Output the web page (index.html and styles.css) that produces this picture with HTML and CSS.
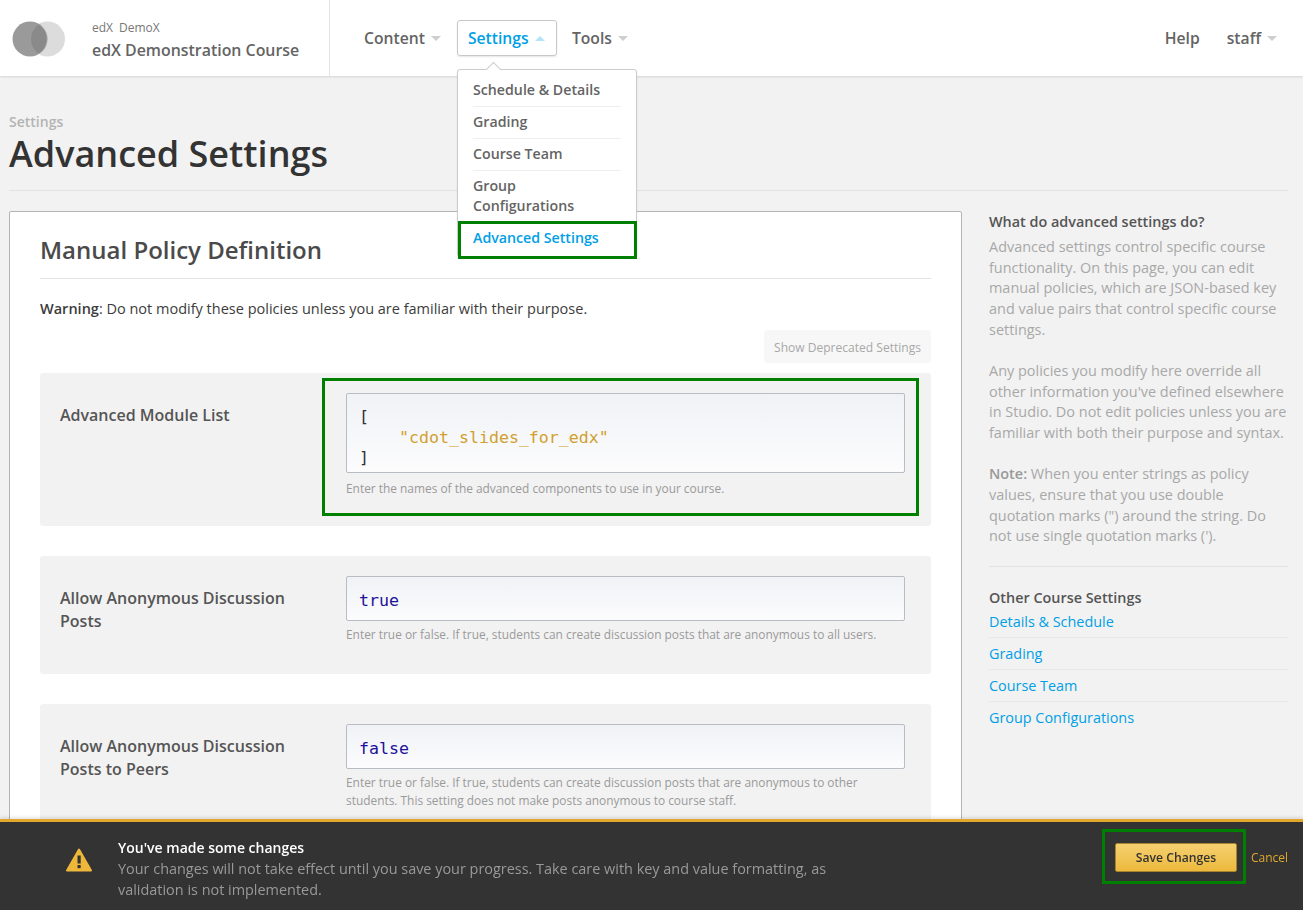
FILE: index.html
```html
<!DOCTYPE html>
<html lang="en">
<head>
    <meta charset="UTF-8">
    <title>Advanced Settings</title>
    <link rel="stylesheet" href="styles.css">
</head>
<body>

    <header class="topbar">
        <div class="course">
            <svg class="logo" width="54" height="36" viewBox="0 0 54 36">
                <circle cx="35.500" cy="18" r="17.500" fill="#dcdcdc"/>
                <circle cx="18" cy="18" r="17.500" fill="#9a9a9a"/>
                <path d="M26.700 3.500a17.500 17.500 0 0 1 0 29a17.500 17.500 0 0 1 0-29z" fill="#8a8a8a"/>
            </svg>
            <div class="course-text">
                <div class="course-org"><span>edX</span><span>DemoX</span></div>
                <div class="course-name">edX Demonstration Course</div>
            </div>
        </div>
        <nav class="nav">
            <div class="nav-item">Content <i class="caret"></i></div>
            <div class="nav-item active">Settings <i class="caret up"></i></div>
            <div class="nav-item">Tools <i class="caret"></i></div>
        </nav>
        <nav class="nav nav-right">
            <div class="nav-item">Help</div>
            <div class="nav-item">staff <i class="caret"></i></div>
        </nav>

        <div class="dropdown">
            <span class="dropdown-tip"></span>
            <a>Schedule &amp; Details</a>
            <a>Grading</a>
            <a>Course Team</a>
            <a class="no-line">Group Configurations</a>
            <a class="current">Advanced Settings</a>
            <span class="mark mark-menu"></span>
        </div>
    </header>

    <div class="page">
        <div class="page-head">
            <div class="subtitle">Settings</div>
            <h1>Advanced Settings</h1>
        </div>

        <div class="columns">
            <section class="panel">
                <h2>Manual Policy Definition</h2>
                <p class="warning"><b>Warning</b>: Do not modify these policies unless you are familiar with their purpose.</p>
                <div class="deprecated-row"><span class="deprecated">Show Deprecated Settings</span></div>

                <div class="policy policy-tall">
                    <div class="policy-label">Advanced Module List</div>
                    <div class="policy-field">
                        <div class="code code-tall">
                            <div>[</div>
                            <div class="code-str">"cdot_slides_for_edx"</div>
                            <div>]</div>
                        </div>
                        <p class="hint">Enter the names of the advanced components to use in your course.</p>
                    </div>
                    <span class="mark mark-policy"></span>
                </div>

                <div class="policy">
                    <div class="policy-label">Allow Anonymous Discussion Posts</div>
                    <div class="policy-field">
                        <div class="code code-kw">true</div>
                        <p class="hint">Enter true or false. If true, students can create discussion posts that are anonymous to all users.</p>
                    </div>
                </div>

                <div class="policy">
                    <div class="policy-label">Allow Anonymous Discussion Posts to Peers</div>
                    <div class="policy-field">
                        <div class="code code-kw">false</div>
                        <p class="hint">Enter true or false. If true, students can create discussion posts that are anonymous to other students. This setting does not make posts anonymous to course staff.</p>
                    </div>
                </div>
            </section>

            <aside class="sidebar">
                <h3>What do advanced settings do?</h3>
                <p>Advanced settings control specific course functionality. On this page, you can edit manual policies, which are JSON-based key and value pairs that control specific course settings.</p>
                <p>Any policies you modify here override all other information you've defined elsewhere in Studio. Do not edit policies unless you are familiar with both their purpose and syntax.</p>
                <p class="last-note"><b>Note:</b> When you enter strings as policy values, ensure that you use double quotation marks (") around the string. Do not use single quotation marks (').</p>
                <div class="side-links">
                    <h3>Other Course Settings</h3>
                    <a>Details &amp; Schedule</a>
                    <a>Grading</a>
                    <a>Course Team</a>
                    <a>Group Configurations</a>
                </div>
            </aside>
        </div>
    </div>

    <footer class="notice">
        <svg class="notice-icon" width="26" height="24" viewBox="0 0 26 24">
            <path d="M13 1.500L25 22.500H1z" fill="#edb83a" stroke="#edb83a" stroke-width="2" stroke-linejoin="round"/>
            <rect x="11.500" y="7.500" width="3.200" height="8" fill="#333"/>
            <rect x="11.500" y="17" width="3.200" height="3.200" fill="#333"/>
        </svg>
        <div class="notice-text">
            <h4>You've made some changes</h4>
            <p>Your changes will not take effect until you save your progress. Take care with key and value formatting, as validation is not implemented.</p>
        </div>
        <div class="notice-actions">
            <div class="save-wrap">
                <button class="save">Save Changes</button>
            </div>
            <a class="cancel">Cancel</a>
        </div>
    </footer>

</body>
</html>
```

FILE: styles.css
```css
* {
    box-sizing: border-box;
}

body {
    margin: 0;
    height: 100vh;
    overflow: hidden;
    background-color: #f2f2f2;
    color: #3c3c3c;
    font-family: 'Open Sans', sans-serif;
    font-size: 14px;
}

/* Top bar */
.topbar {
    position: relative;
    z-index: 2;
    display: flex;
    align-items: stretch;
    height: 76px;
    background-color: #fff;
    box-shadow: 0 1px 2px rgba(0, 0, 0, 0.12);
}

.course {
    display: flex;
    align-items: center;
    width: 330px;
    padding-left: 12px;
    border-right: 1px solid #e4e4e4;
}

.logo {
    margin-right: 26px;
    margin-top: 1px;
}

.course-org {
    display: flex;
    gap: 6px;
    margin-top: 4px;
    font-size: 12px;
    line-height: 16px;
    color: #777;
}

.course-name {
    margin-top: 3px;
    font-size: 15.900px;
    font-weight: 600;
    line-height: 22px;
    color: #646464;
}

.nav {
    display: flex;
    align-items: center;
    gap: 4px;
    padding-left: 23px;
    margin-top: -1px;
}

.nav-right {
    margin-left: auto;
    padding-left: 0;
    padding-right: 15px;
    gap: 5px;
}

.nav-item {
    display: flex;
    align-items: center;
    gap: 6px;
    height: 36px;
    padding: 0 10px;
    border: 1px solid transparent;
    border-radius: 3px;
    font-size: 15.700px;
    font-weight: 600;
    color: #646464;
}

.nav-item.active {
    min-width: 100px;
    margin-left: 1px;
    border-color: #c8c8c8;
    color: #009fe6;
    box-shadow: 0 1px 2px rgba(0, 0, 0, 0.1);
}

.caret {
    width: 0;
    height: 0;
    margin-top: 1px;
    border-left: 5px solid transparent;
    border-right: 5px solid transparent;
    border-top: 5px solid #cfcfcf;
}

.caret.up {
    border-top: 0;
    border-bottom: 5px solid #b3e3f8;
}

/* Settings menu */
.dropdown {
    position: absolute;
    left: 457px;
    top: 69px;
    width: 180px;
    padding: 5px 15px 0;
    background-color: #fff;
    border: 1px solid #ccc;
    border-radius: 3px;
    box-shadow: 0 1px 2px rgba(0, 0, 0, 0.1);
}

.dropdown-tip {
    position: absolute;
    left: 30px;
    top: -6px;
    width: 11px;
    height: 11px;
    background-color: #fff;
    border-top: 1px solid #ccc;
    border-left: 1px solid #ccc;
    transform: rotate(45deg);
}

.dropdown a {
    display: block;
    padding: 5px 20px 6px 0;
    border-bottom: 1px solid #eee;
    font-size: 14.200px;
    font-weight: 600;
    line-height: 20px;
    color: #646464;
}

.dropdown a.no-line {
    border-bottom: 0;
}

.dropdown a.current {
    border-bottom: 0;
    color: #009fe6;
    padding-top: 6px;
    padding-bottom: 8px;
}

/* Green boxes drawn over the screenshot */
.mark {
    position: absolute;
    border: 3px solid #008000;
    pointer-events: none;
}

.mark-menu {
    left: 0;
    top: 151px;
    width: 179px;
    height: 38px;
}

.mark-policy {
    left: 282px;
    top: 5px;
    width: 597px;
    height: 138px;
}

/* Page */
.page {
    padding: 0 15px 0 9px;
}

.page-head {
    padding-top: 36px;
    height: 115px;
    border-bottom: 1px solid #e2e2e2;
}

.subtitle {
    font-size: 14px;
    line-height: 20px;
    font-weight: 600;
    color: #b4b4b4;
}

h1 {
    margin: 0;
    font-size: 36px;
    font-weight: 600;
    line-height: 44px;
    color: #333;
}

.columns {
    display: flex;
    align-items: flex-start;
    margin-top: 20px;
}

.panel {
    flex: 0 0 953px;
    padding: 20px 30px;
    background-color: #fff;
    border: 1px solid #b4b4b4;
    border-radius: 2px;
}

h2 {
    margin: 0;
    height: 47px;
    border-bottom: 1px solid #e2e2e2;
    font-size: 24px;
    font-weight: 600;
    line-height: 36px;
    color: #4a4a4a;
}

.warning {
    margin: 19px 0 0;
    font-size: 14.500px;
    line-height: 22px;
    color: #3c3c3c;
}

.warning b {
    font-weight: 600;
}

.deprecated-row {
    display: flex;
    justify-content: flex-end;
    margin-top: 10px;
}

.deprecated {
    padding: 0 10px;
    height: 33px;
    line-height: 35px;
    font-size: 12.050px;
    color: #a8a8a8;
    background-color: #f7f7f7;
    border-radius: 3px;
}

.policy {
    position: relative;
    display: flex;
    margin-top: 30px;
    padding: 20px 26px 31px 20px;
    background-color: #f2f2f2;
    border-radius: 3px;
}

.policy-tall {
    margin-top: 10px;
    padding-bottom: 29px;
}

.policy-label {
    flex: 0 0 286px;
    padding-right: 30px;
    padding-top: 10.500px;
    font-size: 16px;
    font-weight: 600;
    line-height: 23.500px;
    color: #555;
}

.policy-field {
    flex: 1;
}

.code {
    padding: 13px 12px;
    border: 1px solid #b8bcc4;
    border-radius: 2px;
    background: linear-gradient(#f0f2f6, #fcfcfd);
    font-family: 'DejaVu Sans Mono', monospace;
    font-size: 16.600px;
    line-height: 21px;
    color: #333;
}

.code-tall {
    height: 80px;
    line-height: 20.500px;
}

.code-str {
    padding-left: 40px;
    color: #d1a02f;
}

.code-kw {
    height: 45px;
    color: #221199;
}

.hint {
    margin: 4px 0 0;
    font-size: 11.900px;
    line-height: 18px;
    color: #9a9a9a;
}

.code-tall + .hint {
    margin-top: 6px;
}

/* Sidebar */
.sidebar {
    flex: 0 0 299px;
    margin-left: 27px;
}

h3 {
    margin: 1px 0 5px;
    font-size: 14.400px;
    font-weight: 600;
    line-height: 20px;
    color: #555;
}

.sidebar p {
    margin: 0 0 20.500px;
    font-size: 14.450px;
    line-height: 20.700px;
    color: #a8a8a8;
}

.sidebar p.last-note {
    margin-bottom: 18.500px;
}

.sidebar p b {
    font-weight: 600;
    color: #999;
}

.side-links {
    padding-top: 20px;
    border-top: 1px solid #e2e2e2;
}

.side-links h3 {
    margin-bottom: -2px;
}

.side-links a {
    display: block;
    padding: 5px 0;
    border-bottom: 1px solid #e8e8e8;
    font-size: 14.400px;
    line-height: 21px;
    color: #009fe6;
}

.side-links a:last-child {
    border-bottom: 0;
}

/* Unsaved changes bar */
.notice {
    position: fixed;
    left: 0;
    right: 0;
    bottom: 0;
    z-index: 3;
    display: flex;
    height: 91px;
    padding-left: 66px;
    background-color: #333;
    border-top: 3px solid #e1a82b;
    box-shadow: 0 -2px 3px rgba(0, 0, 0, 0.1);
}

.notice-icon {
    margin-top: 26px;
}

.notice-text {
    width: 720px;
    margin-left: 26px;
    padding-top: 16px;
}

h4 {
    margin: 0;
    font-size: 14px;
    font-weight: 600;
    line-height: 20px;
    color: #fff;
}

.notice-text p {
    margin: 0;
    font-size: 14.430px;
    line-height: 21px;
    color: #999;
}

.notice-actions {
    display: flex;
    align-items: flex-start;
    margin-left: auto;
    padding-right: 14px;
}

.save-wrap {
    width: 144px;
    height: 55px;
    margin-top: 7px;
    padding: 11px 6px 9px 10px;
    border: 3px solid #008000;
}

.save {
    display: block;
    width: 122px;
    height: 29px;
    padding: 0;
    border: 1px solid #a8842e;
    border-radius: 2px;
    background: linear-gradient(#f5d071, #ecb93c);
    font-family: inherit;
    font-size: 12.200px;
    font-weight: 600;
    color: #333;
}

.cancel {
    width: 38px;
    margin: 28px 0 0 5px;
    font-size: 12px;
    line-height: 16px;
    color: #e1a82b;
}
```
